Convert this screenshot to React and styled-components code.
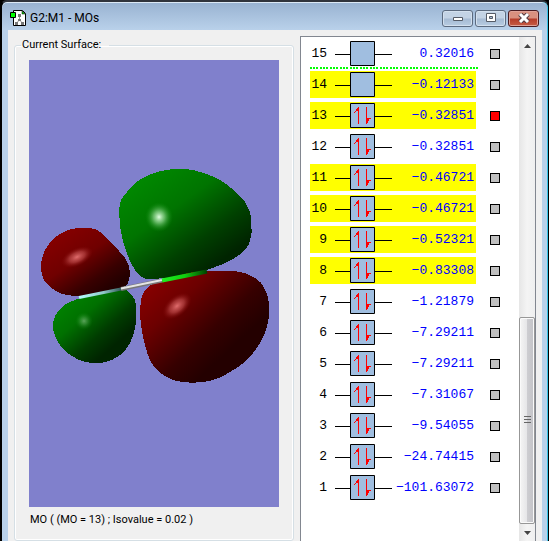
import { useState } from 'react'
import styled, { createGlobalStyle, css } from 'styled-components'

const GlobalStyle = createGlobalStyle`
  * {
    box-sizing: border-box;
  }

  body {
    margin: 0;
    overflow: hidden;
    background: #000;
    color: #000;
    font-family: Roboto, 'Liberation Sans', sans-serif;
    font-size: 11px;
  }
`

const Window = styled.div`
  display: flex;
  flex-direction: column;
  min-height: 100vh;
  padding: 0 6px;
  border: solid #000;
  border-width: 2px 1px 0 2px;
  border-top-color: #30343c;
  border-radius: 7px 7px 0 0;
  background: linear-gradient(#98b2d1, #b9d1ea 28px, #b9d1ea);
  box-shadow: inset -1px 0 #35c4e8, inset 0 1px #dce9f6;
`

const TitleBar = styled.header`
  display: flex;
  align-items: center;
  gap: 4px;
  height: 28px;
  padding: 4px 3px 0 2px;
`

const Title = styled.h1`
  flex: 1;
  margin: 0;
  font-size: 12px;
  font-weight: 400;
  line-height: 16px;
`

const Controls = styled.div`
  display: flex;
  gap: 2px;
`

const ControlButton = styled.button`
  display: grid;
  place-items: center;
  width: 31px;
  height: 17px;
  padding: 0;
  border: 1px solid #5c6b80;
  border-radius: 3px;
  background: linear-gradient(#c3d3e5 48%, #a5bad3 52%, #b8cce2);
  box-shadow: inset 0 0 0 1px #d3e0ee;

  ${props =>
    props.$danger &&
    css`
      border-color: #4a1c22;
      background: linear-gradient(#d9907f 48%, #b53c29 52%, #c65c45);
      box-shadow: inset 0 0 0 1px #dfa196;
    `}
`

const Content = styled.main`
  display: grid;
  flex: 1;
  grid-template-columns: minmax(0, 280fr) minmax(0, 236fr);
  column-gap: 6px;
  padding: 6px 6px 0;
  background: #f0f0f0;
`

const Surface = styled.fieldset`
  align-self: start;
  min-width: 0;
  margin: 2px 0 0;
  padding: 8px 14px 12px;
  border: 1px solid #d5dfe5;
  border-radius: 3px;
  box-shadow: inset 0 0 0 1px #fff;
`

const Legend = styled.legend`
  margin-left: -8px;
  padding: 0 8px 0 1px;
  line-height: 14px;
`

const Viewport = styled.svg`
  display: block;
  width: 100%;
  background: #8080cc;
`

const Caption = styled.p`
  margin: 5px 1px 0;
  line-height: 16px;
`

const ListBox = styled.section`
  display: flex;
  justify-content: space-between;
  border: 1px solid #828790;
  border-bottom: 0;
  background: #fff;
`

const Orbitals = styled.table`
  display: block;
  padding: 3px 0 0 9px;
  font-family: 'Liberation Mono', monospace;
  font-size: 13px;
  line-height: 27px;
`

const Rows = styled.tbody`
  display: flex;
  flex-direction: column;
  gap: 4px;
`

const Row = styled.tr`
  display: flex;
  align-items: center;
  gap: 14px;
  height: 27px;
`

const Level = styled.td`
  display: flex;
  align-items: center;
  width: 166px;
  height: 27px;
  padding: 0 2px 0 0;
  background: ${props => (props.$marked ? '#ff0' : 'none')};
`

const Index = styled.span`
  width: 17px;
  margin-right: 8px;
  text-align: right;
`

const Energy = styled.span`
  flex: 1;
  color: #00f;
  text-align: right;
`

const Pick = styled.td`
  display: flex;
  padding: 0;
`

const Tick = styled.input`
  width: 10px;
  height: 10px;
  margin: 0;
  border: 1px solid #000;
  background: #c0c0c0;
  appearance: none;

  &:checked {
    background: #f00;
  }
`

const Divider = styled.tr`
  width: 170px;
  height: 2px;
  margin: -4px 0 -2px;
  background: repeating-linear-gradient(
    90deg,
    #0f0 0 2px,
    #fff 2px 3px,
    #0f0 3px 5px,
    #fff 5px 6px,
    #0f0 6px 8px,
    #fff 8px 10px
  );
`

const ScrollBar = styled.div`
  display: flex;
  flex-direction: column;
  width: 16px;
  background: linear-gradient(90deg, #e6e6e6, #f4f4f4 50%, #efefef);
`

const ArrowButton = styled.button`
  display: grid;
  place-items: center;
  height: 17px;
  padding: 0;
  border: 0;
  background: none;
`

const Track = styled.div`
  display: flex;
  flex: 1;
  flex-direction: column;
  justify-content: flex-end;
`

const Thumb = styled.button`
  display: grid;
  place-items: center;
  height: 44%;
  padding: 0;
  border: 1px solid #979797;
  border-radius: 2px;
  background: linear-gradient(90deg, #f5f5f5, #e6e6e8 48%, #cdcdd1 52%, #c2c2c6);
  box-shadow: inset 0 0 0 1px #fafafa;
`

const levels = [
  { id: 15, energy: '0.32016', occupied: false, marked: false },
  { id: 14, energy: '−0.12133', occupied: false, marked: true },
  { id: 13, energy: '−0.32851', occupied: true, marked: true },
  { id: 12, energy: '−0.32851', occupied: true, marked: false },
  { id: 11, energy: '−0.46721', occupied: true, marked: true },
  { id: 10, energy: '−0.46721', occupied: true, marked: true },
  { id: 9, energy: '−0.52321', occupied: true, marked: true },
  { id: 8, energy: '−0.83308', occupied: true, marked: true },
  { id: 7, energy: '−1.21879', occupied: true, marked: false },
  { id: 6, energy: '−7.29211', occupied: true, marked: false },
  { id: 5, energy: '−7.29211', occupied: true, marked: false },
  { id: 4, energy: '−7.31067', occupied: true, marked: false },
  { id: 3, energy: '−9.54055', occupied: true, marked: false },
  { id: 2, energy: '−24.74415', occupied: true, marked: false },
  { id: 1, energy: '−101.63072', occupied: true, marked: false },
]

function AppIcon() {
  return (
    <svg width="16" height="17" viewBox="0 0 16 17" aria-hidden="true">
      <path d="M3.5 .5h9l3 3v12h-12z" fill="#fff" stroke="#000" />
      <path d="M12 1v3h3z" fill="#0c0" stroke="#000" strokeWidth="0.5" />
      <path d="M9.500 5v5l-3 3M9.500 10l3 3" fill="none" stroke="#999" />
      <path d="M8 4h3v3H8zM8 9h3v2H8zM5 12h3v3H5zM11 12h3v3h-3z" fill="#777" />
      <path d="M.5 2.500h5v5h-5z" fill="#0f0" stroke="#000" />
    </svg>
  )
}

// Energy level with its electron pair
function Occupancy({ occupied }) {
  return (
    <svg width="57" height="25" viewBox="0 0 57 25" aria-hidden="true">
      <path d="M0 13.500h57" stroke="#000" />
      <path d="M15.500 .5h24v24h-24z" fill="#a0bee0" stroke="#000" />
      {occupied && (
        <g fill="#f00" shapeRendering="crispEdges">
          <path d="M23 4h1v17h-1z" />
          <path d="M22 5h1v3h-1zM21 6h1v2h-1zM20 8h1v1h-1zM19 9h1v1h-1z" />
          <path d="M31 4h1v17h-1z" />
          <path d="M32 15h1v5h-1zM33 15h1v3h-1zM34 15h2v1h-2z" />
        </g>
      )}
    </svg>
  )
}

function Lobes() {
  return (
    <Viewport viewBox="29 60 250 447" role="img" aria-label="MO 13 surface">
      <defs>
        <linearGradient id="greenBig" x1="0.1" y1="0.1" x2="0.75" y2="0.85">
          <stop offset="0" stopColor="#008a00" />
          <stop offset="0.4" stopColor="#007400" />
          <stop offset="0.75" stopColor="#004000" />
          <stop offset="1" stopColor="#002400" />
        </linearGradient>
        <linearGradient id="redBig" x1="0.05" y1="0.1" x2="0.7" y2="0.7">
          <stop offset="0" stopColor="#8a0000" />
          <stop offset="0.35" stopColor="#6c0000" />
          <stop offset="0.75" stopColor="#360000" />
          <stop offset="1" stopColor="#240000" />
        </linearGradient>
        <linearGradient id="redSmall" x1="0.15" y1="0.1" x2="0.8" y2="0.85">
          <stop offset="0" stopColor="#860000" />
          <stop offset="0.45" stopColor="#700000" />
          <stop offset="0.8" stopColor="#380000" />
          <stop offset="1" stopColor="#240000" />
        </linearGradient>
        <linearGradient id="greenSmall" x1="0.1" y1="0.1" x2="0.75" y2="0.75">
          <stop offset="0" stopColor="#008600" />
          <stop offset="0.4" stopColor="#007000" />
          <stop offset="0.75" stopColor="#003c00" />
          <stop offset="1" stopColor="#002400" />
        </linearGradient>
        <radialGradient id="greenShine">
          <stop offset="0" stopColor="#e0ffe0" />
          <stop offset="0.4" stopColor="#7cc87c" stopOpacity="0.8" />
          <stop offset="1" stopColor="#088808" stopOpacity="0" />
        </radialGradient>
        <radialGradient id="redShine">
          <stop offset="0" stopColor="#e06c6c" />
          <stop offset="0.5" stopColor="#b84444" stopOpacity="0.7" />
          <stop offset="1" stopColor="#800808" stopOpacity="0" />
        </radialGradient>
        <linearGradient id="bond" x1="79" y1="0" x2="120" y2="0" gradientUnits="userSpaceOnUse">
          <stop offset="0" stopColor="#b4ffff" />
          <stop offset="0.6" stopColor="#90c8c8" />
          <stop offset="1" stopColor="#386060" />
        </linearGradient>
        <linearGradient id="bondEnd" x1="162" y1="0" x2="207" y2="0" gradientUnits="userSpaceOnUse">
          <stop offset="0" stopColor="#20f020" />
          <stop offset="0.5" stopColor="#10d010" />
          <stop offset="1" stopColor="#004000" />
        </linearGradient>
      </defs>
      <g shapeRendering="crispEdges">
        <path
          d="M119 210C120 201 122 197 127 192C131 186 137 181 143 178C155 171 168 169 180 169C188 169 195 170 200 172C207 174 215 177 220 180C231 187 239 194 245 202C250 210 252 218 251 225C252 230 252 235 250 240C249 244 248 247 245 250C239 256 231 261 223 264L207 270C195 274 182 277 170 278L147 279C141 278 138 274 135 270C131 265 129 259 127 253C123 243 121 234 120 225Z"
          fill="url(#greenBig)"
        />
        <path
          d="M140 310L141 300C142 295 144 291 147 288C151 284 157 282 163 281L183 274C190 272 198 271 207 271L233 271C241 272 247 273 253 277C259 280 263 284 265 290C268 295 269 301 269 307C269 314 269 321 267 327C264 337 259 346 253 353C247 361 239 367 230 372C221 378 212 381 203 382C194 383 185 383 177 381C169 379 162 375 157 370C152 365 149 359 147 352C143 340 140 323 140 310Z"
          fill="url(#redBig)"
        />
        <path
          d="M82 228C88 228 93 228 97 230C102 233 107 237 110 242C116 247 121 253 125 258C128 263 130 268 130 273C130 278 129 282 127 285C123 288 117 289 110 290L80 296C75 296 71 296 67 295C61 294 57 292 53 289C48 286 45 282 43 278C41 274 41 269 41 265C41 260 43 255 45 250C49 243 54 237 60 234C66 230 74 228 82 228Z"
          fill="url(#redSmall)"
        />
        <path
          d="M53 327C53 321 54 317 57 313C60 308 65 304 70 302L80 298L117 290C123 289 128 290 130 293C134 297 136 301 136 305L136 323C135 330 133 337 130 343C127 349 122 354 117 357C111 361 104 363 97 363C90 363 83 362 77 359C71 356 66 352 62 348C57 341 53 334 53 327Z"
          fill="url(#greenSmall)"
        />
      </g>
      <ellipse cx="159" cy="217" rx="14" ry="15" fill="url(#greenShine)" />
      <ellipse cx="177" cy="306" rx="17" ry="10" fill="url(#redShine)" transform="rotate(-40 177 306)" />
      <ellipse cx="77" cy="257" rx="17" ry="9" fill="url(#redShine)" transform="rotate(-25 77 257)" />
      <ellipse cx="84" cy="321" rx="9" ry="9" fill="url(#greenShine)" opacity="0.4" />
      <path d="M79 297.500L121 289" stroke="url(#bond)" strokeWidth="3" />
      <path d="M121 289L162 280.500" stroke="#777" strokeWidth="4" />
      <path d="M121 288.500L162 280" stroke="#e4e4e4" strokeWidth="2" />
      <path d="M162 280.500L207 271.500" stroke="url(#bondEnd)" strokeWidth="4" />
    </Viewport>
  )
}

export default function App() {
  const [selected, setSelected] = useState([13])

  const toggle = id =>
    setSelected(ids =>
      ids.includes(id) ? ids.filter(other => other !== id) : [...ids, id]
    )

  return (
    <>
      <GlobalStyle />
      <Window>
        <TitleBar>
          <AppIcon />
          <Title>G2:M1 - MOs</Title>
          <Controls>
            <ControlButton aria-label="Minimize">
              <svg width="12" height="10" viewBox="0 0 12 10">
                <path d="M1.500 4.500h9v3h-9z" fill="#fff" stroke="#555b66" />
              </svg>
            </ControlButton>
            <ControlButton aria-label="Maximize">
              <svg width="12" height="10" viewBox="0 0 12 10">
                <path d="M1.500 .5h9v8h-9z" fill="#fff" stroke="#555b66" />
                <path d="M4.500 3.500h3v2h-3z" fill="#a9bdd4" stroke="#555b66" />
              </svg>
            </ControlButton>
            <ControlButton $danger aria-label="Close">
              <svg width="12" height="10" viewBox="0 0 12 10">
                <path d="M2 1l8 8M10 1l-8 8" stroke="#543b42" strokeWidth="5" />
                <path d="M2 1l8 8M10 1l-8 8" stroke="#fff" strokeWidth="3" />
              </svg>
            </ControlButton>
          </Controls>
        </TitleBar>
        <Content>
          <Surface>
            <Legend>Current Surface:</Legend>
            <Lobes />
            <Caption>MO ( (MO = 13) ; Isovalue = 0.02 )</Caption>
          </Surface>
          <ListBox>
            <Orbitals>
              <Rows>
                {levels.map(level => [
                  <Row key={level.id}>
                    <Level $marked={level.marked}>
                      <Index>{level.id}</Index>
                      <Occupancy occupied={level.occupied} />
                      <Energy>{level.energy}</Energy>
                    </Level>
                    <Pick>
                      <Tick
                        type="checkbox"
                        aria-label={`Orbital ${level.id}`}
                        checked={selected.includes(level.id)}
                        onChange={() => toggle(level.id)}
                      />
                    </Pick>
                  </Row>,
                  level.id === 15 && <Divider key="divider" />,
                ])}
              </Rows>
            </Orbitals>
            <ScrollBar>
              <ArrowButton aria-label="Scroll up">
                <svg width="7" height="4" viewBox="0 0 7 4">
                  <path d="M0 4L3.500 0L7 4z" fill="#444" />
                </svg>
              </ArrowButton>
              <Track>
                <Thumb aria-label="Scroll position">
                  <svg width="7" height="9" viewBox="0 0 7 9">
                    <path d="M0 .5h7M0 3.500h7M0 6.500h7" stroke="#666" />
                  </svg>
                </Thumb>
              </Track>
              <ArrowButton aria-label="Scroll down">
                <svg width="7" height="4" viewBox="0 0 7 4">
                  <path d="M0 0h7L3.500 4z" fill="#444" />
                </svg>
              </ArrowButton>
            </ScrollBar>
          </ListBox>
        </Content>
      </Window>
    </>
  )
}
